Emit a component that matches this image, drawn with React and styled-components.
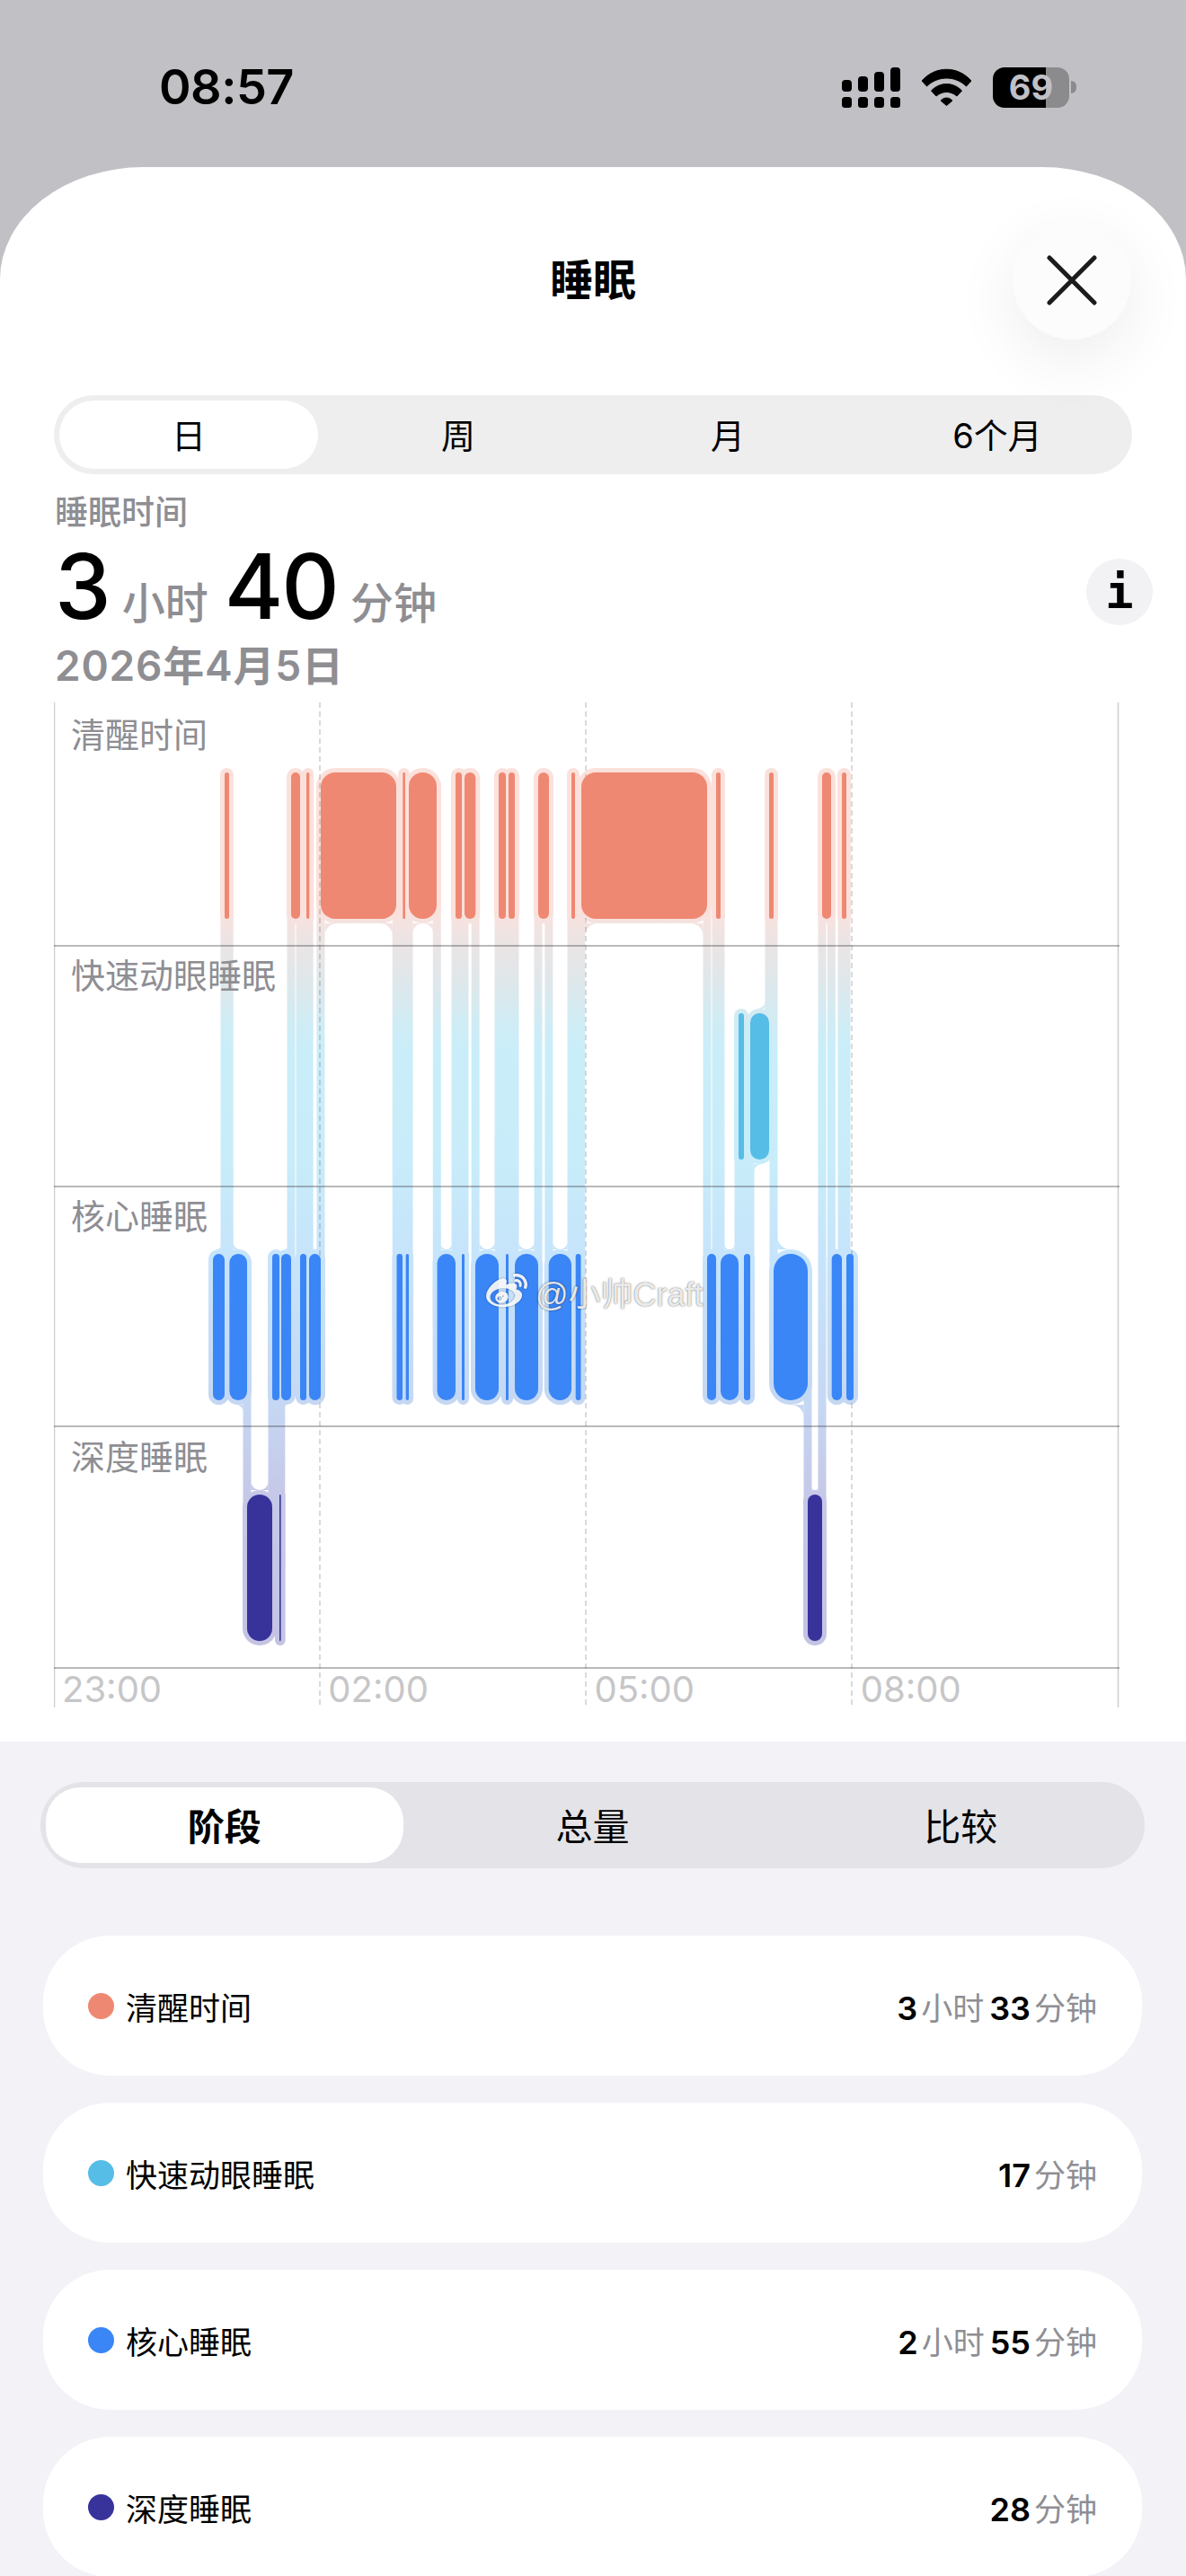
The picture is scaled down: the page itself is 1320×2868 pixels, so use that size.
import React from "react";
import styled, { createGlobalStyle } from "styled-components";
import { FaWeibo } from "react-icons/fa";

const SANS = `Inter, "Noto Sans CJK SC", "Liberation Sans", sans-serif`;

const Global = createGlobalStyle`
  html, body { margin: 0; padding: 0; background: #c1c0c5; }
  * { box-sizing: border-box; }
  body { font-family: ${SANS}; }
`;

const Screen = styled.div`
  width: 1320px;
  height: 2868px;
  overflow: hidden;
  background: #c1c0c5;
  color: #000;
`;

/* ---------- status bar ---------- */
const StatusBar = styled.header`
  height: 186px;
  padding: 8px 122px 0 177px;
  display: flex;
  align-items: center;
  justify-content: space-between;
`;
const Clock = styled.div`
  font-size: 54px;
  font-weight: 600;
  letter-spacing: -0.5px;
  line-height: 1;
`;
const StatusIcons = styled.div`
  display: flex;
  align-items: center;
  gap: 23px;
`;
const BatteryShell = styled.div`
  position: relative;
  width: 93px;
  height: 45px;
  display: flex;
`;
const BatteryBody = styled.div`
  width: 85px;
  height: 45px;
  border-radius: 13px;
  overflow: hidden;
  background: linear-gradient(90deg, #000 0, #000 69%, #8b8b8e 69%, #8b8b8e 100%);
  display: flex;
  align-items: center;
  justify-content: center;
  font-size: 38px;
  font-weight: 700;
  color: #c1c0c5;
  line-height: 1;
`;
const BatteryNub = styled.div`
  width: 6px;
  height: 14px;
  margin: 15px 0 0 2px;
  border-radius: 0 7px 7px 0;
  background: #8b8b8e;
`;

const SignalIcon = () => (
  <svg width="65" height="45" viewBox="0 0 65 45" aria-hidden="true">
    <g fill="#000">
      <rect x="0" y="14" width="11" height="13" rx="4" />
      <rect x="18" y="10" width="11" height="17" rx="4" />
      <rect x="36" y="5" width="11" height="22" rx="4" />
      <rect x="54" y="0" width="11" height="27" rx="4" />
      <rect x="0" y="33" width="11" height="12" rx="3.5" />
      <rect x="18" y="33" width="11" height="12" rx="3.5" />
      <rect x="36" y="33" width="11" height="12" rx="3.5" />
      <rect x="54" y="33" width="11" height="12" rx="3.5" />
    </g>
  </svg>
);

const WifiIcon = () => (
  <svg width="57" height="42" viewBox="0 0 57 42" aria-hidden="true">
    <g fill="#000" stroke="#000" strokeWidth="1" strokeLinejoin="round">
      <path d="M1 14 C 16 -3, 41 -3, 56 14 L 50.5 20 C 38 8, 19 8, 6.5 20 Z" />
      <path d="M11.5 25 C 21 15, 36 15, 45.5 25 L 40 31 C 33 25, 24 25, 17 31 Z" />
      <path d="M22 36 C 26 32, 31 32, 35 36 L 28.5 41.5 Z" />
    </g>
  </svg>
);

/* ---------- sheet ---------- */
const Sheet = styled.main`
  background: #fff;
  border-radius: 160px 160px 0 0 / 125px 125px 0 0;
  padding: 60px 0 38px;
`;
const SheetHeader = styled.div`
  display: grid;
  grid-template-columns: 1fr auto 1fr;
  align-items: center;
  padding: 0 61px;
  margin-bottom: 62px;
`;
const SheetTitle = styled.h1`
  grid-column: 2;
  margin: 0;
  font-size: 48px;
  font-weight: 700;
  line-height: 1;
`;
const CloseButton = styled.button`
  grid-column: 3;
  justify-self: end;
  width: 132px;
  height: 132px;
  padding: 0;
  border: 0;
  border-radius: 50%;
  background: #fcfcfc;
  box-shadow: 0 22px 70px rgba(0, 0, 0, 0.075);
  display: flex;
  align-items: center;
  justify-content: center;
`;

const Segments = styled.div`
  display: grid;
  grid-template-columns: repeat(${(p) => p.$count}, 1fr);
  height: ${(p) => p.$height}px;
  margin: ${(p) => p.$margin};
  border-radius: ${(p) => p.$height / 2}px;
  background: ${(p) => p.$bg};
`;
const Segment = styled.div`
  margin: 6px;
  padding-bottom: 3px;
  border-radius: 38px;
  display: flex;
  align-items: center;
  justify-content: center;
  font-size: ${(p) => p.$size}px;
  font-weight: ${(p) => (p.$bold ? 700 : 400)};
  background: ${(p) => (p.$active ? "#fff" : "transparent")};
`;

const Summary = styled.section`
  display: flex;
  align-items: center;
  justify-content: space-between;
  padding: 0 37px 0 61px;
  margin-top: 21px;
  height: 220px;
`;
const SummaryText = styled.div`
  display: flex;
  flex-direction: column;
`;
const SummaryLabel = styled.div`
  font-size: 37px;
  font-weight: 500;
  color: #8e8e93;
  line-height: 44px;
`;
const Duration = styled.div`
  display: flex;
  align-items: baseline;
  height: 120px;
  line-height: 120px;
`;
const BigNumber = styled.span`
  font-size: 100px;
  font-weight: 500;
  letter-spacing: -2px;
`;
const BigUnit = styled.span`
  font-size: 48px;
  font-weight: 500;
  color: #8e8e93;
  margin: 0 18px 0 14px;
`;
const DateLine = styled.div`
  font-size: 46px;
  font-weight: 600;
  color: #8e8e93;
  line-height: 56px;
  letter-spacing: 0.8px;
`;
const InfoButton = styled.div`
  width: 74px;
  height: 74px;
  border-radius: 50%;
  background: #f2f2f4;
  display: flex;
  align-items: center;
  justify-content: center;
  font-family: "DejaVu Sans Mono", monospace;
  font-size: 52px;
  font-weight: 700;
  line-height: 1;
`;

/* ---------- sleep stage chart ---------- */
const ChartBox = styled.section`
  position: relative;
  width: 1186px;
  height: 1119px;
  margin: 13px 0 0 60px;
`;
const ChartLayer = styled.svg`
  position: absolute;
  left: 0;
  top: 0;
  display: block;
`;
const StageRow = styled.div`
  position: relative;
  z-index: 1;
  height: ${(p) => p.$height}px;
  padding: ${(p) => p.$pad}px 0 0 19px;
  font-size: 38px;
  color: #8e8e93;
  line-height: 46px;
`;
const AxisRow = styled.div`
  position: relative;
  z-index: 1;
  display: grid;
  grid-template-columns: repeat(4, 296.25px);
  height: 44px;
`;
const AxisLabel = styled.div`
  padding: 2px 0 0 9px;
  font-size: 40px;
  color: #c6c6c8;
  line-height: 44px;
`;
const Watermark = styled.div`
  position: absolute;
  z-index: 2;
  left: 481px;
  top: 630px;
  display: flex;
  align-items: center;
  gap: 9px;
  color: rgba(255, 255, 255, 0.9);
  font-family: "Liberation Sans", "Noto Sans CJK SC", sans-serif;
  font-size: 36px;
  white-space: nowrap;
  text-shadow: 0 0 1px rgba(0, 0, 0, 0.55), 0 0 3px rgba(0, 0, 0, 0.3);
  svg {
    filter: drop-shadow(0 0 1px rgba(0, 0, 0, 0.4));
  }
`;

const ROW_TOP = [859, 1127, 1395, 1663];
const BLOCK_H = 163;
const HALO = 5;
const BAND = 4.5;
const FILL = ["#ef8872", "#56bde6", "#3a86f7", "#37339b"];

// Night timeline: stage row (0 awake, 1 REM, 2 core, 3 deep) and x span in the chart's space.
const TIMELINE = [
  [2, 237, 250], [0, 250, 255], [2, 255.4, 275], [3, 275, 303], [2, 303, 311],
  [3, 311, 312.6], [2, 313, 324], [0, 324, 334], [2, 334, 341], [0, 341, 344.3],
  [2, 344, 357], [0, 357, 441], [2, 441.5, 448], [0, 448.3, 451], [2, 451.7, 455],
  [0, 455, 486], [2, 486.6, 507], [0, 507, 514], [2, 514, 517], [0, 517, 529.3],
  [2, 529, 555], [0, 555, 563], [2, 563, 566], [0, 566, 573], [2, 573, 599],
  [0, 599, 611], [2, 610.7, 636], [0, 636, 640], [2, 640.7, 646.5], [0, 647, 787],
  [2, 787, 797], [0, 797, 802], [2, 802, 822], [1, 822, 828], [2, 828, 835],
  [1, 835, 856], [0, 856, 861], [2, 861, 899], [3, 899, 915], [0, 915, 925],
  [2, 925.7, 937], [0, 937, 942], [2, 942, 950],
].map(([row, x1, x2]) => ({ row, x1, x2 }));

const blockRadius = (w) => (w <= 40 ? w / 2 : 16);
const midY = (s) => ROW_TOP[s.row] + BLOCK_H / 2;

// Concave corner where a connector meets the halo of a block.
function fillet(edge, y, r, dirX, dirY) {
  const sweep = dirX * dirY > 0 ? 1 : 0;
  return `M${edge + dirX * r} ${y} L${edge} ${y} L${edge} ${y + dirY * r} A${r} ${r} 0 0 ${sweep} ${edge + dirX * r} ${y} Z`;
}

function flareRadius(i, lookDown) {
  const s = TIMELINE[i];
  const near = [TIMELINE[i - 1], TIMELINE[i + 1]].filter(
    (n) => n && (lookDown ? n.row > s.row : n.row < s.row)
  ).length;
  return Math.min(14, (s.x2 - s.x1 - BAND * near) / 2);
}

function connectorPaths() {
  const out = [];
  for (let i = 0; i < TIMELINE.length - 1; i++) {
    const a = TIMELINE[i];
    const b = TIMELINE[i + 1];
    const x = (a.x2 + b.x1) / 2;
    const aUpper = a.row < b.row;
    const upper = aUpper ? a : b;
    const lower = aUpper ? b : a;
    const upperIdx = aUpper ? i : i + 1;
    const lowerIdx = aUpper ? i + 1 : i;
    out.push(`M${x - BAND} ${midY(upper)} H${x + BAND} V${midY(lower)} H${x - BAND} Z`);
    const yTop = ROW_TOP[upper.row] + BLOCK_H + HALO;
    const yBottom = ROW_TOP[lower.row] - HALO;
    const rTop = flareRadius(upperIdx, true);
    const rBottom = flareRadius(lowerIdx, false);
    const upDir = aUpper ? -1 : 1;
    if (rTop > 1) out.push(fillet(x + upDir * BAND, yTop, rTop, upDir, 1));
    if (rBottom > 1) out.push(fillet(x - upDir * BAND, yBottom, rBottom, -upDir, -1));
  }
  return out;
}

const Hypnogram = () => (
  <ChartLayer width="1186" height="1119" viewBox="60 781 1186 1119" aria-hidden="true">
    <defs>
      <linearGradient id="stageWash" gradientUnits="userSpaceOnUse" x1="0" y1="781" x2="0" y2="1900">
        <stop offset={(1012 - 781) / 1119} stopColor="#fbe1dc" />
        <stop offset={(1040 - 781) / 1119} stopColor="#eee4e3" />
        <stop offset={(1090 - 781) / 1119} stopColor="#dfe7ea" />
        <stop offset={(1140 - 781) / 1119} stopColor="#cfecf5" />
        <stop offset={(1170 - 781) / 1119} stopColor="#c9eef9" />
        <stop offset={(1295 - 781) / 1119} stopColor="#c8ecf9" />
        <stop offset={(1395 - 781) / 1119} stopColor="#c6e4fb" />
        <stop offset={(1558 - 781) / 1119} stopColor="#c5d8f3" />
        <stop offset={(1663 - 781) / 1119} stopColor="#c6c8e8" />
        <stop offset={(1826 - 781) / 1119} stopColor="#c4c3e3" />
      </linearGradient>
    </defs>

    <g fill="url(#stageWash)">
      {TIMELINE.map((s, i) => {
        const r = blockRadius(s.x2 - s.x1);
        return (
          <rect
            key={i}
            x={s.x1 - HALO}
            y={ROW_TOP[s.row] - HALO}
            width={s.x2 - s.x1 + HALO * 2}
            height={BLOCK_H + HALO * 2}
            rx={r + HALO}
          />
        );
      })}
      {connectorPaths().map((d, i) => (
        <path key={i} d={d} />
      ))}
    </g>

    <g stroke="rgba(60,60,67,0.36)" strokeWidth="2">
      {[1052, 1320, 1587, 1856].map((y) => (
        <line key={y} x1="60" x2="1246" y1={y} y2={y} />
      ))}
    </g>
    <g stroke="rgba(60,60,67,0.25)" strokeWidth="1.5">
      <line x1="60.5" x2="60.5" y1="781" y2="1900" />
      <line x1="1244.5" x2="1244.5" y1="781" y2="1900" />
      {[356, 652, 948].map((x) => (
        <line key={x} x1={x} x2={x} y1="781" y2="1900" strokeDasharray="6 4" />
      ))}
    </g>

    {TIMELINE.map((s, i) => (
      <rect
        key={i}
        x={s.x1}
        y={ROW_TOP[s.row]}
        width={s.x2 - s.x1}
        height={BLOCK_H}
        rx={blockRadius(s.x2 - s.x1)}
        fill={FILL[s.row]}
      />
    ))}
  </ChartLayer>
);

/* ---------- lower part ---------- */
const Lower = styled.section`
  background: #f2f2f7;
  padding: 45px 46px 0 45px;
  height: 930px;
`;
const StageList = styled.div`
  display: flex;
  flex-direction: column;
  gap: 30px;
  margin: 75px 3px 0;
`;
const StageCard = styled.div`
  height: 156px;
  padding: 0 50px;
  border-radius: 74px;
  background: #fff;
  display: flex;
  align-items: center;
`;
const Dot = styled.span`
  width: 29px;
  height: 29px;
  border-radius: 50%;
  background: ${(p) => p.$color};
  margin-right: 13px;
`;
const StageName = styled.span`
  flex: 1;
  font-size: 35px;
`;
const Value = styled.span`
  display: flex;
  align-items: baseline;
`;
const ValueNum = styled.span`
  font-size: 36px;
  font-weight: 600;
`;
const ValueUnit = styled.span`
  font-size: 35px;
  color: #8e8e93;
  margin: 0 6px 0 4px;
  &:last-child {
    margin-right: 0;
  }
`;

const STAGES = [
  { name: "清醒时间", color: FILL[0], value: [["3", "小时"], ["33", "分钟"]] },
  { name: "快速动眼睡眠", color: FILL[1], value: [["17", "分钟"]] },
  { name: "核心睡眠", color: FILL[2], value: [["2", "小时"], ["55", "分钟"]] },
  { name: "深度睡眠", color: FILL[3], value: [["28", "分钟"]] },
];

export default function App() {
  return (
    <Screen>
      <Global />
      <StatusBar>
        <Clock>08:57</Clock>
        <StatusIcons>
          <SignalIcon />
          <WifiIcon />
          <BatteryShell>
            <BatteryBody>69</BatteryBody>
            <BatteryNub />
          </BatteryShell>
        </StatusIcons>
      </StatusBar>

      <Sheet>
        <SheetHeader>
          <SheetTitle>睡眠</SheetTitle>
          <CloseButton aria-label="关闭">
            <svg width="56" height="56" viewBox="0 0 56 56" aria-hidden="true">
              <path d="M3 3 L53 53 M53 3 L3 53" stroke="#1c1c1e" strokeWidth="5" strokeLinecap="round" />
            </svg>
          </CloseButton>
        </SheetHeader>

        <Segments $count={4} $height={88} $margin="0 60px" $bg="#eeeeef">
          <Segment $active $size={38}>日</Segment>
          <Segment $size={38}>周</Segment>
          <Segment $size={38}>月</Segment>
          <Segment $size={38}>6个月</Segment>
        </Segments>

        <Summary>
          <SummaryText>
            <SummaryLabel>睡眠时间</SummaryLabel>
            <Duration>
              <BigNumber>3</BigNumber>
              <BigUnit>小时</BigUnit>
              <BigNumber>40</BigNumber>
              <BigUnit>分钟</BigUnit>
            </Duration>
            <DateLine>2026年4月5日</DateLine>
          </SummaryText>
          <InfoButton>i</InfoButton>
        </Summary>

        <ChartBox>
          <Hypnogram />
          <StageRow $height={271} $pad={13}>清醒时间</StageRow>
          <StageRow $height={268} $pad={10}>快速动眼睡眠</StageRow>
          <StageRow $height={267} $pad={10}>核心睡眠</StageRow>
          <StageRow $height={269} $pad={11}>深度睡眠</StageRow>
          <AxisRow>
            <AxisLabel>23:00</AxisLabel>
            <AxisLabel>02:00</AxisLabel>
            <AxisLabel>05:00</AxisLabel>
            <AxisLabel>08:00</AxisLabel>
          </AxisRow>
          <Watermark>
            <FaWeibo size={46} />
            <span>@小帅Craft</span>
          </Watermark>
        </ChartBox>
      </Sheet>

      <Lower>
        <Segments $count={3} $height={96} $margin="0" $bg="#e3e3e8">
          <Segment $active $bold $size={41}>阶段</Segment>
          <Segment $size={41}>总量</Segment>
          <Segment $size={41}>比较</Segment>
        </Segments>
        <StageList>
          {STAGES.map((s) => (
            <StageCard key={s.name}>
              <Dot $color={s.color} />
              <StageName>{s.name}</StageName>
              <Value>
                {s.value.map(([n, u]) => (
                  <React.Fragment key={u}>
                    <ValueNum>{n}</ValueNum>
                    <ValueUnit>{u}</ValueUnit>
                  </React.Fragment>
                ))}
              </Value>
            </StageCard>
          ))}
        </StageList>
      </Lower>
    </Screen>
  );
}
